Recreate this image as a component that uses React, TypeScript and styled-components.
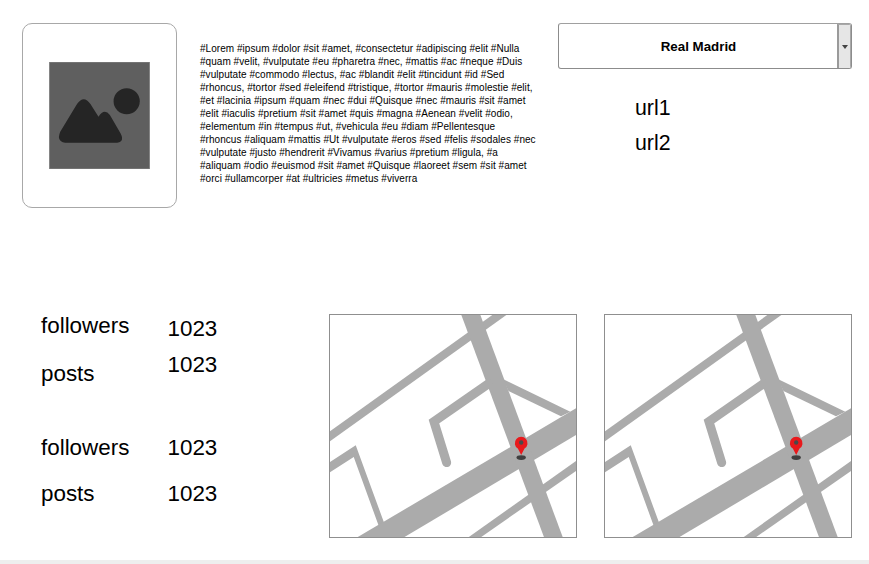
import React from "react";
import styled, { createGlobalStyle } from "styled-components";

const GlobalStyle = createGlobalStyle`
  html, body {
    margin: 0;
    padding: 0;
    background: #fff;
    font-family: "Liberation Sans", Arial, sans-serif;
    color: #000;
  }
`;

const Page = styled.div`
  width: 869px;
  height: 564px;
  overflow: hidden;
  display: flex;
  flex-direction: column;
  box-sizing: border-box;
  border-bottom: 4px solid #eeeeee;
`;

const TopRow = styled.div`
  display: flex;
  align-items: flex-start;
  height: 313px;
  padding: 23px 17px 0 22px;
  box-sizing: border-box;
`;

const ImageCard = styled.div`
  flex: none;
  width: 155px;
  height: 185px;
  box-sizing: border-box;
  border: 1px solid #a8a8a8;
  border-radius: 10px;
  display: flex;
  align-items: center;
  justify-content: center;
  padding-right: 1px;
`;

const Tags = styled.p`
  flex: none;
  width: 338px;
  margin: 19px 4px 0 23px;
  font-size: 10px;
  letter-spacing: 0.045px;
  line-height: 13px;
`;

const SideColumn = styled.div`
  margin-left: 16px;
  width: 294px;
`;

const Dropdown = styled.div`
  height: 46px;
  box-sizing: border-box;
  border: 1px solid #8c8c8c;
  border-top-color: #a0a0a0;
  border-radius: 3px;
  display: flex;
  overflow: hidden;
`;

const DropdownLabel = styled.div`
  flex: 1;
  display: flex;
  align-items: center;
  justify-content: center;
  font-size: 13.33px;
  font-weight: 700;
  padding-left: 1px;
`;

const DropdownArrow = styled.div`
  width: 14px;
  box-sizing: border-box;
  background: #e6e6e6;
  border-left: 2px solid #9a9a9a;
  border-right: 1px solid #a8a8a8;
  border-top: 1px solid #a8a8a8;
  display: flex;
  align-items: center;
  justify-content: center;

  &::after {
    content: "";
    border-left: 3.5px solid transparent;
    border-right: 3.5px solid transparent;
    border-top: 4px solid #444;
  }
`;

const UrlList = styled.div`
  margin: 27px 0 0 77px;
  display: flex;
  flex-direction: column;
  gap: 10px;
  font-size: 21.33px;
  line-height: 25px;
`;

const BottomRow = styled.div`
  display: flex;
  align-items: flex-start;
  padding: 0 17px 0 41px;
`;

const Stats = styled.div`
  width: 288px;
  flex: none;
  display: flex;
  flex-direction: column;
  gap: 48px;
`;

const StatGroup = styled.div`
  display: grid;
  grid-template-columns: 126.5px 1fr;
`;

const StatColumn = styled.div<{ $gap: number; $top?: number }>`
  display: flex;
  flex-direction: column;
  gap: ${(p) => p.$gap}px;
  padding-top: ${(p) => p.$top ?? 0}px;
  font-size: 22.4px;
  line-height: 26px;
`;

const Maps = styled.div`
  display: flex;
  gap: 27px;
  margin-top: 1px;
`;

const MapFrame = styled.svg`
  display: block;
  width: 248px;
  height: 224px;
  box-sizing: border-box;
  border: 1px solid #8f8f8f;
`;

const ImagePlaceholder = () => (
  <svg width="101" height="107" viewBox="149 187 300 319">
    <rect x="149" y="187" width="300" height="319" fill="#5f5f5f" stroke="#8a8a8a" strokeWidth="3" />
    <circle cx="380" cy="304" r="39" fill="#252525" />
    <path
      d="M205 428 Q168 428 182 395 L232 312 Q252 284 272 312 L296 350 Q313 324 330 345 L362 400 Q376 428 345 428 Z"
      fill="#252525"
    />
  </svg>
);

const ROAD = "#ababab";

const MapPicture = () => (
  <MapFrame viewBox="31 31 736 663">
    <rect x="0" y="0" width="800" height="720" fill="#fff" />
    <g fill={ROAD}>
      <polygon points="28,380 520,28 562,28 28,410" />
      <polygon points="28,472 108,420 192,650 178,665 102,455 28,503" />
      <polygon points="110,697 770,308 770,388 250,697" />
      <polygon points="548,222 750,320 722,333 565,258" />
      <polygon points="443,697 770,465 770,495 480,697" />
      <polygon points="423,28 480,28 728,697 672,697" />
    </g>
    <polyline
      points="505,236 342,349 380,472"
      fill="none"
      stroke={ROAD}
      strokeWidth="27"
      strokeLinecap="round"
      strokeLinejoin="miter"
    />
    <ellipse cx="603" cy="457" rx="14" ry="7" fill="#3f3f3f" />
    <path
      d="M603 449 L593 430 A19 19 0 1 1 613 430 Z"
      fill="#e8191c"
    />
    <circle cx="603" cy="412" r="6.5" fill="#4a4a4a" />
  </MapFrame>
);

const TAGS =
  "#Lorem #ipsum #dolor #sit #amet, #consectetur #adipiscing #elit #Nulla #quam #velit, #vulputate #eu #pharetra #nec, #mattis #ac #neque #Duis #vulputate #commodo #lectus, #ac #blandit #elit #tincidunt #id #Sed #rhoncus, #tortor #sed #eleifend #tristique, #tortor #mauris #molestie #elit, #et #lacinia #ipsum #quam #nec #dui #Quisque #nec #mauris #sit #amet #elit #iaculis #pretium #sit #amet #quis #magna #Aenean #velit #odio, #elementum #in #tempus #ut, #vehicula #eu #diam #Pellentesque #rhoncus #aliquam #mattis #Ut #vulputate #eros #sed #felis #sodales #nec #vulputate #justo #hendrerit #Vivamus #varius #pretium #ligula, #a #aliquam #odio #euismod #sit #amet #Quisque #laoreet #sem #sit #amet #orci #ullamcorper #at #ultricies #metus #viverra";

const App = () => {
  return (
    <Page>
      <GlobalStyle />
      <TopRow>
        <ImageCard>
          <ImagePlaceholder />
        </ImageCard>
        <Tags>{TAGS}</Tags>
        <SideColumn>
          <Dropdown>
            <DropdownLabel>Real Madrid</DropdownLabel>
            <DropdownArrow />
          </Dropdown>
          <UrlList>
            <div>url1</div>
            <div>url2</div>
          </UrlList>
        </SideColumn>
      </TopRow>
      <BottomRow>
        <Stats>
          <StatGroup>
            <StatColumn $gap={22}>
              <div>followers</div>
              <div>posts</div>
            </StatColumn>
            <StatColumn $gap={10} $top={3}>
              <div>1023</div>
              <div>1023</div>
            </StatColumn>
          </StatGroup>
          <StatGroup>
            <StatColumn $gap={20}>
              <div>followers</div>
              <div>posts</div>
            </StatColumn>
            <StatColumn $gap={20}>
              <div>1023</div>
              <div>1023</div>
            </StatColumn>
          </StatGroup>
        </Stats>
        <Maps>
          <MapPicture />
          <MapPicture />
        </Maps>
      </BottomRow>
    </Page>
  );
};

export default App;
